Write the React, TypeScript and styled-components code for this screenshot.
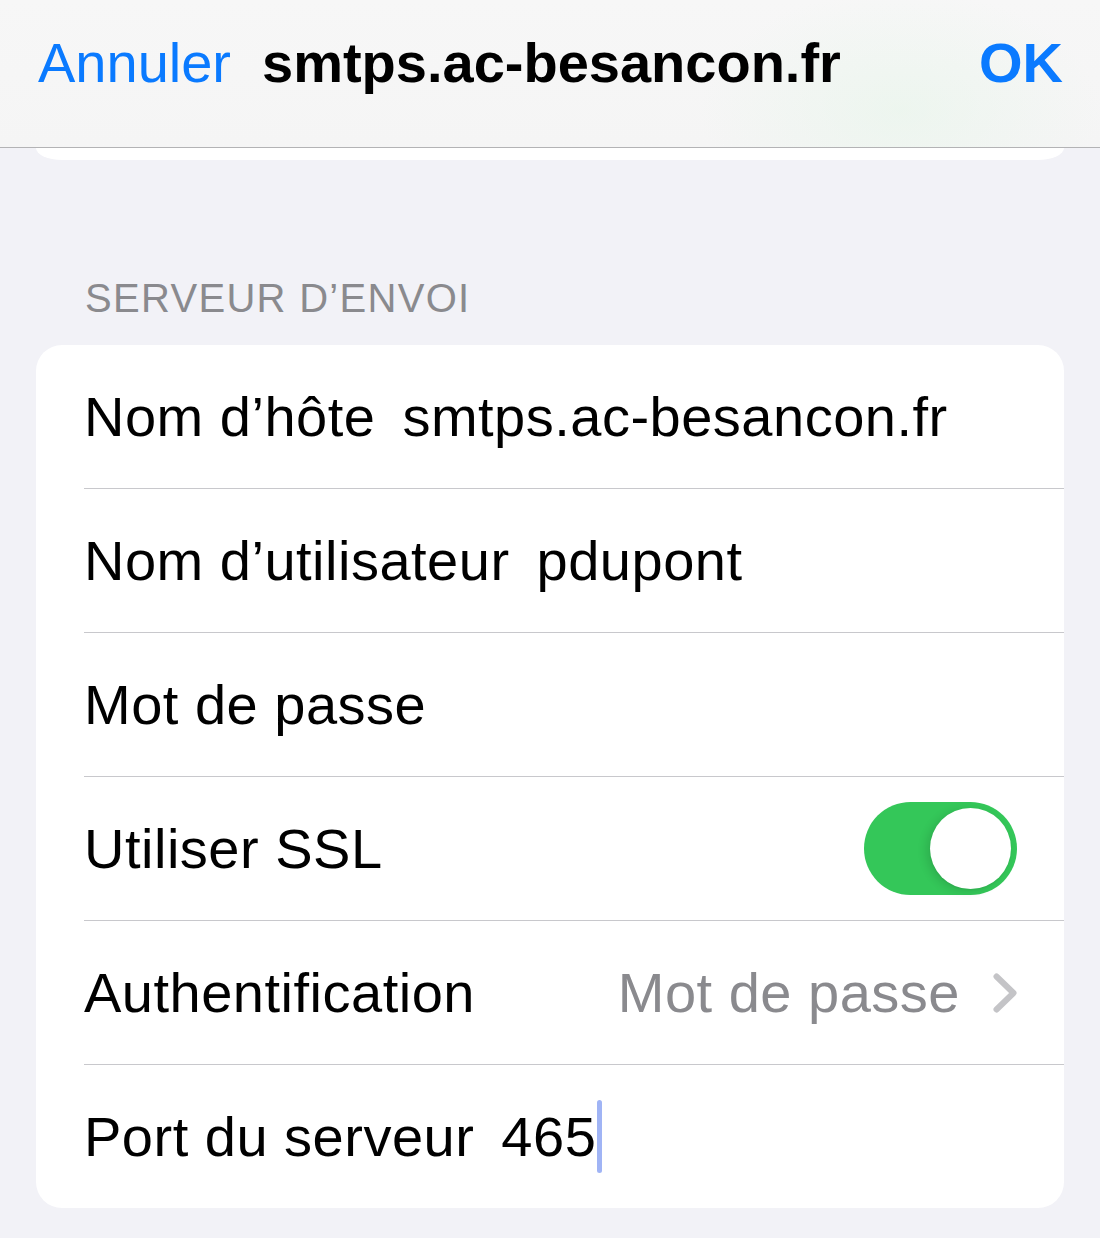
import React from 'react';
import styled, { createGlobalStyle } from 'styled-components';

const GlobalStyle = createGlobalStyle`
  html, body {
    margin: 0;
    padding: 0;
    background: #f2f2f7;
  }

  body {
    font-family: "Liberation Sans", Arial, sans-serif;
    -webkit-font-smoothing: antialiased;
  }

  * {
    box-sizing: border-box;
  }
`;

const Page = styled.div`
  width: 1100px;
  min-height: 1238px;
  background: #f2f2f7;
  overflow: hidden;
`;

const NavBar = styled.header`
  display: flex;
  align-items: flex-start;
  height: 148px;
  padding: 35px 37px 0 38px;
  border-bottom: 1px solid #b3b3b5;
  background:
    radial-gradient(ellipse 200px 120px at 900px 110px, rgba(226, 246, 230, 0.45), transparent),
    linear-gradient(180deg, #f7f7f7 0%, #f5f5f5 100%);
  line-height: 56px;
  font-size: 56px;
`;

const NavButton = styled.span<{ $bold?: boolean }>`
  color: #0a7aff;
  font-weight: ${(p) => (p.$bold ? 700 : 400)};
`;

const NavTitle = styled.span`
  flex: 1;
  margin-left: 31px;
  color: #000;
  font-weight: 700;
`;

// bottom of the previous group, partly hidden under the nav bar
const PrevCardEnd = styled.div`
  height: 12px;
  margin: 0 36px;
  background: #fff;
  border-radius: 0 0 26px 26px / 0 0 12px 12px;
`;

const SectionTitle = styled.div`
  margin: 118px 0 27px;
  padding-left: 85px;
  font-size: 40px;
  line-height: 40px;
  letter-spacing: 1.3px;
  color: #8a8a8e;
  text-transform: uppercase;
`;

const Card = styled.section`
  margin: 0 36px;
  background: #fff;
  border-radius: 26px;
  overflow: hidden;
`;

const Row = styled.div`
  display: flex;
  padding-left: 48px;
`;

const RowInner = styled.div<{ $last?: boolean }>`
  display: flex;
  align-items: center;
  flex: 1;
  height: ${(p) => (p.$last ? '143px' : '144px')};
  padding-right: 47px;
  border-bottom: ${(p) => (p.$last ? 'none' : '1px solid #c8c8cc')};
  font-size: 56px;
  line-height: 56px;
  letter-spacing: 0.5px;
`;

const Label = styled.span`
  color: #000;
  white-space: nowrap;
`;

const Value = styled.span`
  display: flex;
  align-items: center;
  margin-left: 27px;
  color: #000;
  white-space: nowrap;
`;

const DetailValue = styled.span`
  display: flex;
  align-items: center;
  gap: 33px;
  margin-left: auto;
  color: #8a8a8e;
  white-space: nowrap;
`;

const Caret = styled.span`
  display: inline-block;
  width: 5px;
  height: 73px;
  margin-left: 1px;
  border-radius: 3px;
  background: #a0b4f5;
`;

const Switch = styled.div<{ $on?: boolean }>`
  display: flex;
  justify-content: ${(p) => (p.$on ? 'flex-end' : 'flex-start')};
  align-items: center;
  width: 153px;
  height: 93px;
  margin-left: auto;
  padding: 0 6px;
  border-radius: 47px;
  background: ${(p) => (p.$on ? '#34c759' : '#e9e9eb')};
`;

const Knob = styled.div`
  width: 81px;
  height: 81px;
  border-radius: 50%;
  background: #fff;
  box-shadow: -4px 2px 10px rgba(0, 0, 0, 0.12), 0 1px 2px rgba(0, 0, 0, 0.06);
`;

const Chevron = () => (
  <svg width="24" height="40" viewBox="0 0 24 40" fill="none">
    <path
      d="M3.5 3.5 L20.5 20 L3.5 36.5"
      stroke="#c4c4c7"
      strokeWidth="6"
      strokeLinecap="round"
      strokeLinejoin="round"
    />
  </svg>
);

const App: React.FC = () => {
  return (
    <Page>
      <GlobalStyle />
      <NavBar>
        <NavButton>Annuler</NavButton>
        <NavTitle>smtps.ac-besancon.fr</NavTitle>
        <NavButton $bold>OK</NavButton>
      </NavBar>
      <PrevCardEnd />

      <SectionTitle>Serveur d’envoi</SectionTitle>
      <Card>
        <Row>
          <RowInner>
            <Label>Nom d’hôte</Label>
            <Value>smtps.ac-besancon.fr</Value>
          </RowInner>
        </Row>
        <Row>
          <RowInner>
            <Label>Nom d’utilisateur</Label>
            <Value>pdupont</Value>
          </RowInner>
        </Row>
        <Row>
          <RowInner>
            <Label>Mot de passe</Label>
          </RowInner>
        </Row>
        <Row>
          <RowInner>
            <Label>Utiliser SSL</Label>
            <Switch $on>
              <Knob />
            </Switch>
          </RowInner>
        </Row>
        <Row>
          <RowInner>
            <Label>Authentification</Label>
            <DetailValue>
              Mot de passe
              <Chevron />
            </DetailValue>
          </RowInner>
        </Row>
        <Row>
          <RowInner $last>
            <Label>Port du serveur</Label>
            <Value>
              465
              <Caret />
            </Value>
          </RowInner>
        </Row>
      </Card>
    </Page>
  );
};

export default App;
